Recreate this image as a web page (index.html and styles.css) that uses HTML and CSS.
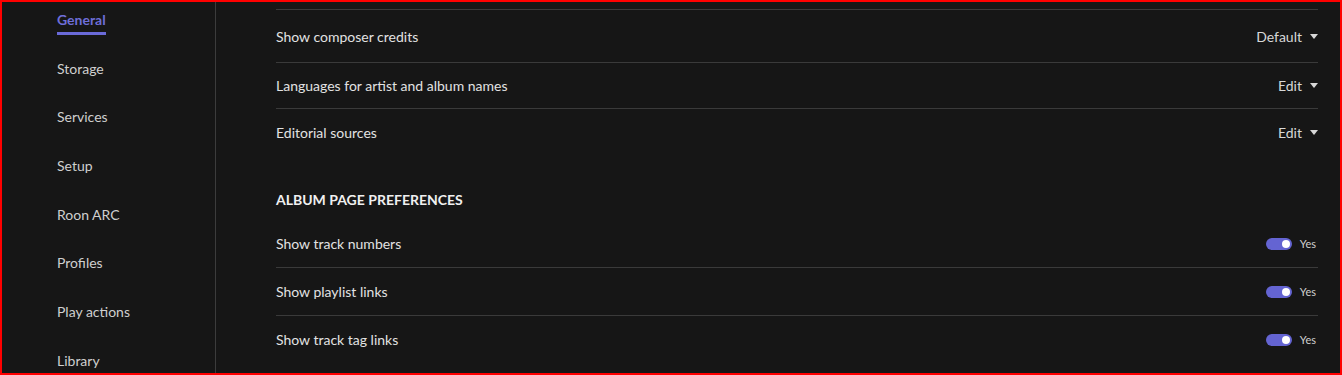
FILE: index.html
```html
<!DOCTYPE html>
<html lang="en">
<head>
    <meta charset="UTF-8">
    <meta name="viewport" content="width=device-width, initial-scale=1.0">
    <title>Settings</title>
    <link rel="stylesheet" href="styles.css">
</head>
<body>
    <div id="frame">
        <nav id="sidebar">
            <a class="nav-item active"><span>General</span></a>
            <a class="nav-item">Storage</a>
            <a class="nav-item">Services</a>
            <a class="nav-item">Setup</a>
            <a class="nav-item">Roon ARC</a>
            <a class="nav-item">Profiles</a>
            <a class="nav-item">Play actions</a>
            <a class="nav-item">Library</a>
        </nav>

        <main id="content">
            <div class="settings-list">
                <div class="row row-tall">
                    <span class="label">Show composer credits</span>
                    <span class="dropdown">Default
                        <svg width="8" height="5" viewBox="0 0 8 5"><path d="M0 0h8L4 5z" fill="currentColor"/></svg>
                    </span>
                </div>
                <div class="row row-short">
                    <span class="label">Languages for artist and album names</span>
                    <span class="dropdown">Edit
                        <svg width="8" height="5" viewBox="0 0 8 5"><path d="M0 0h8L4 5z" fill="currentColor"/></svg>
                    </span>
                </div>
                <div class="row last">
                    <span class="label">Editorial sources</span>
                    <span class="dropdown">Edit
                        <svg width="8" height="5" viewBox="0 0 8 5"><path d="M0 0h8L4 5z" fill="currentColor"/></svg>
                    </span>
                </div>
            </div>

            <h2 class="section-title">ALBUM PAGE PREFERENCES</h2>

            <div class="settings-list plain">
                <div class="row">
                    <span class="label">Show track numbers</span>
                    <span class="toggle-wrap"><span class="toggle on"></span><span class="toggle-text">Yes</span></span>
                </div>
                <div class="row">
                    <span class="label">Show playlist links</span>
                    <span class="toggle-wrap"><span class="toggle on"></span><span class="toggle-text">Yes</span></span>
                </div>
                <div class="row last">
                    <span class="label">Show track tag links</span>
                    <span class="toggle-wrap"><span class="toggle on"></span><span class="toggle-text">Yes</span></span>
                </div>
            </div>
        </main>
    </div>
</body>
</html>
```

FILE: styles.css
```css
* {
    box-sizing: border-box;
}
body {
    margin: 0;
    font-family: Lato, "Open Sans", sans-serif;
    background-color: #161616;
    color: #dedede;
}
#frame {
    display: flex;
    width: 1342px;
    height: 375px;
    border: 2px solid #ff0000;
    background-color: #161616;
    overflow: hidden;
}
#sidebar {
    width: 214px;
    flex-shrink: 0;
    border-right: 1px solid #3c3c3c;
    padding-left: 55px;
    padding-top: 0;
    margin-top: -5px;
    height: calc(100% + 5px);
}
.nav-item {
    display: block;
    height: 48.7px;
    padding-top: 13px;
    line-height: 20px;
    font-size: 14px;
    color: #cfcfcf;
}
.nav-item.active {
    color: #6e6ed8;
    font-weight: 700;
}
.nav-item.active span {
    display: inline-block;
    border-bottom: 3px solid #6a6ad8;
    padding-bottom: 2px;
}
#content {
    flex: 1;
    padding: 7px 22px 0 60px;
}
.settings-list {
    border-top: 1px solid #3a3a3a;
}
.settings-list.plain {
    border-top: none;
}
.row {
    display: flex;
    justify-content: space-between;
    align-items: center;
    height: 48px;
    border-bottom: 1px solid #3a3a3a;
    font-size: 14px;
}
.row.row-tall {
    height: 53px;
}
.row.row-short {
    height: 46px;
}
.row.last {
    border-bottom: none;
    height: 47px;
}
.label {
    color: #e2e2e2;
}
.dropdown {
    display: flex;
    align-items: center;
    gap: 8px;
    color: #d8d8d8;
}
.section-title {
    margin: 34px 0 10px;
    font-size: 14px;
    line-height: 20px;
    font-weight: 700;
    color: #f0f0f0;
}
.toggle-wrap {
    display: flex;
    align-items: center;
    gap: 8px;
    padding-right: 2px;
}
.toggle {
    position: relative;
    width: 26px;
    height: 12px;
    border-radius: 6px;
    background-color: #6464d2;
}
.toggle.on::after {
    content: "";
    position: absolute;
    right: 2px;
    top: 2px;
    width: 8px;
    height: 8px;
    border-radius: 50%;
    background-color: #ffffff;
}
.toggle-text {
    font-size: 11px;
    color: #d0d0d0;
}
```
